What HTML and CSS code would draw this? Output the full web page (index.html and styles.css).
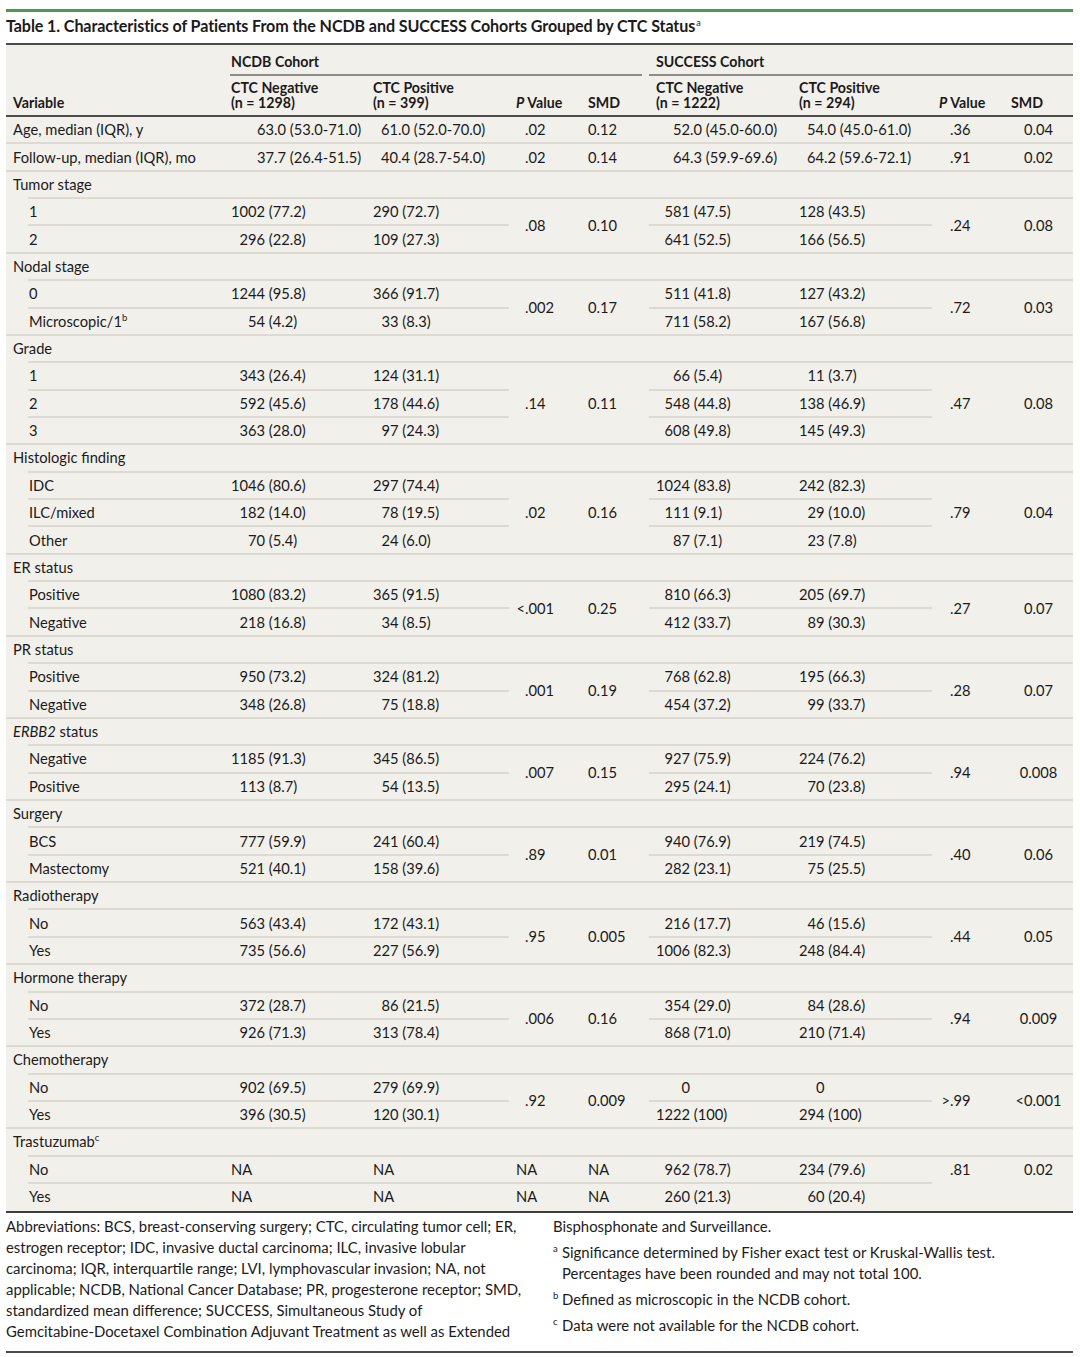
FILE: index.html
```html
<!DOCTYPE html>
<html lang="en">
<head>
<meta charset="utf-8">
<title>Table 1</title>
<link rel="stylesheet" href="styles.css">
</head>
<body>
<div class="page">
  <div class="rule-green"></div>
  <h1 class="title">Table 1. Characteristics of Patients From the NCDB and SUCCESS Cohorts Grouped by CTC Status<sup>a</sup></h1>
  <table class="tbl">
    <colgroup>
      <col class="w1"><col class="w2"><col class="w3"><col class="w4"><col class="w5"><col class="w6"><col class="w7"><col class="w8"><col class="w9">
    </colgroup>
    <thead>
      <tr class="hA">
        <th class="hv" rowspan="2">Variable</th>
        <th class="hc" colspan="4"><div class="coh coh1">NCDB Cohort</div></th>
        <th class="hc" colspan="4"><div class="coh coh2">SUCCESS Cohort</div></th>
      </tr>
      <tr class="hB">
        <th class="hb">CTC Negative<br>(n = 1298)</th>
        <th class="hb">CTC Positive<br>(n = 399)</th>
        <th class="hb"><i>P</i> Value</th>
        <th class="hb">SMD</th>
        <th class="hb">CTC Negative<br>(n = 1222)</th>
        <th class="hb">CTC Positive<br>(n = 294)</th>
        <th class="hb"><i>P</i> Value</th>
        <th class="hb">SMD</th>
      </tr>
    </thead>
    <tbody>
      <tr>
        <td class="v l">Age, median (IQR), y</td>
        <td class="m2 l">63.0 (53.0-71.0)</td><td class="m3 l">61.0 (52.0-70.0)</td>
        <td class="p l"><span class="ip"></span>.02</td><td class="s l">0.12</td>
        <td class="m6 l">52.0 (45.0-60.0)</td><td class="m7 l">54.0 (45.0-61.0)</td>
        <td class="p2 l"><span class="ip2"></span>.36</td><td class="s2 l">0.04</td>
      </tr>
      <tr>
        <td class="v l">Follow-up, median (IQR), mo</td>
        <td class="m2 l">37.7 (26.4-51.5)</td><td class="m3 l">40.4 (28.7-54.0)</td>
        <td class="p l"><span class="ip"></span>.02</td><td class="s l">0.14</td>
        <td class="m6 l">64.3 (59.9-69.6)</td><td class="m7 l">64.2 (59.6-72.1)</td>
        <td class="p2 l"><span class="ip2"></span>.91</td><td class="s2 l">0.02</td>
      </tr>

      <tr><td class="v li" colspan="9">Tumor stage</td></tr>
      <tr>
        <td class="vs li">1</td>
        <td class="l"><span class="n4">1002</span> (77.2)</td><td class="l"><span class="n3">290</span> (72.7)</td>
        <td class="p l" rowspan="2"><span class="ip"></span>.08</td><td class="s l" rowspan="2">0.10</td>
        <td class="l"><span class="n4">581</span> (47.5)</td><td class="l"><span class="n3">128</span> (43.5)</td>
        <td class="p2 l" rowspan="2"><span class="ip2"></span>.24</td><td class="s2 l" rowspan="2">0.08</td>
      </tr>
      <tr>
        <td class="vs l">2</td>
        <td class="l"><span class="n4">296</span> (22.8)</td><td class="l"><span class="n3">109</span> (27.3)</td>
        <td class="l"><span class="n4">641</span> (52.5)</td><td class="l"><span class="n3">166</span> (56.5)</td>
      </tr>

      <tr><td class="v li" colspan="9">Nodal stage</td></tr>
      <tr>
        <td class="vs li">0</td>
        <td class="l"><span class="n4">1244</span> (95.8)</td><td class="l"><span class="n3">366</span> (91.7)</td>
        <td class="p l" rowspan="2"><span class="ip"></span>.002</td><td class="s l" rowspan="2">0.17</td>
        <td class="l"><span class="n4">511</span> (41.8)</td><td class="l"><span class="n3">127</span> (43.2)</td>
        <td class="p2 l" rowspan="2"><span class="ip2"></span>.72</td><td class="s2 l" rowspan="2">0.03</td>
      </tr>
      <tr>
        <td class="vs l">Microscopic/1<sup>b</sup></td>
        <td class="l"><span class="n4">54</span> (4.2)</td><td class="l"><span class="n3">33</span> (8.3)</td>
        <td class="l"><span class="n4">711</span> (58.2)</td><td class="l"><span class="n3">167</span> (56.8)</td>
      </tr>

      <tr><td class="v li" colspan="9">Grade</td></tr>
      <tr>
        <td class="vs li">1</td>
        <td class="l"><span class="n4">343</span> (26.4)</td><td class="l"><span class="n3">124</span> (31.1)</td>
        <td class="p l" rowspan="3"><span class="ip"></span>.14</td><td class="s l" rowspan="3">0.11</td>
        <td class="l"><span class="n4">66</span> (5.4)</td><td class="l"><span class="n3">11</span> (3.7)</td>
        <td class="p2 l" rowspan="3"><span class="ip2"></span>.47</td><td class="s2 l" rowspan="3">0.08</td>
      </tr>
      <tr>
        <td class="vs li">2</td>
        <td class="l"><span class="n4">592</span> (45.6)</td><td class="l"><span class="n3">178</span> (44.6)</td>
        <td class="l"><span class="n4">548</span> (44.8)</td><td class="l"><span class="n3">138</span> (46.9)</td>
      </tr>
      <tr>
        <td class="vs l">3</td>
        <td class="l"><span class="n4">363</span> (28.0)</td><td class="l"><span class="n3">97</span> (24.3)</td>
        <td class="l"><span class="n4">608</span> (49.8)</td><td class="l"><span class="n3">145</span> (49.3)</td>
      </tr>

      <tr><td class="v li" colspan="9">Histologic finding</td></tr>
      <tr>
        <td class="vs li">IDC</td>
        <td class="l"><span class="n4">1046</span> (80.6)</td><td class="l"><span class="n3">297</span> (74.4)</td>
        <td class="p l" rowspan="3"><span class="ip"></span>.02</td><td class="s l" rowspan="3">0.16</td>
        <td class="l"><span class="n4">1024</span> (83.8)</td><td class="l"><span class="n3">242</span> (82.3)</td>
        <td class="p2 l" rowspan="3"><span class="ip2"></span>.79</td><td class="s2 l" rowspan="3">0.04</td>
      </tr>
      <tr>
        <td class="vs li">ILC/mixed</td>
        <td class="l"><span class="n4">182</span> (14.0)</td><td class="l"><span class="n3">78</span> (19.5)</td>
        <td class="l"><span class="n4">111</span> (9.1)</td><td class="l"><span class="n3">29</span> (10.0)</td>
      </tr>
      <tr>
        <td class="vs l">Other</td>
        <td class="l"><span class="n4">70</span> (5.4)</td><td class="l"><span class="n3">24</span> (6.0)</td>
        <td class="l"><span class="n4">87</span> (7.1)</td><td class="l"><span class="n3">23</span> (7.8)</td>
      </tr>

      <tr><td class="v li" colspan="9">ER status</td></tr>
      <tr>
        <td class="vs li">Positive</td>
        <td class="l"><span class="n4">1080</span> (83.2)</td><td class="l"><span class="n3">365</span> (91.5)</td>
        <td class="p l" rowspan="2"><span class="ip">&lt;</span>.001</td><td class="s l" rowspan="2">0.25</td>
        <td class="l"><span class="n4">810</span> (66.3)</td><td class="l"><span class="n3">205</span> (69.7)</td>
        <td class="p2 l" rowspan="2"><span class="ip2"></span>.27</td><td class="s2 l" rowspan="2">0.07</td>
      </tr>
      <tr>
        <td class="vs l">Negative</td>
        <td class="l"><span class="n4">218</span> (16.8)</td><td class="l"><span class="n3">34</span> (8.5)</td>
        <td class="l"><span class="n4">412</span> (33.7)</td><td class="l"><span class="n3">89</span> (30.3)</td>
      </tr>

      <tr><td class="v li" colspan="9">PR status</td></tr>
      <tr>
        <td class="vs li">Positive</td>
        <td class="l"><span class="n4">950</span> (73.2)</td><td class="l"><span class="n3">324</span> (81.2)</td>
        <td class="p l" rowspan="2"><span class="ip"></span>.001</td><td class="s l" rowspan="2">0.19</td>
        <td class="l"><span class="n4">768</span> (62.8)</td><td class="l"><span class="n3">195</span> (66.3)</td>
        <td class="p2 l" rowspan="2"><span class="ip2"></span>.28</td><td class="s2 l" rowspan="2">0.07</td>
      </tr>
      <tr>
        <td class="vs l">Negative</td>
        <td class="l"><span class="n4">348</span> (26.8)</td><td class="l"><span class="n3">75</span> (18.8)</td>
        <td class="l"><span class="n4">454</span> (37.2)</td><td class="l"><span class="n3">99</span> (33.7)</td>
      </tr>

      <tr><td class="v li" colspan="9"><i>ERBB2</i> status</td></tr>
      <tr>
        <td class="vs li">Negative</td>
        <td class="l"><span class="n4">1185</span> (91.3)</td><td class="l"><span class="n3">345</span> (86.5)</td>
        <td class="p l" rowspan="2"><span class="ip"></span>.007</td><td class="s l" rowspan="2">0.15</td>
        <td class="l"><span class="n4">927</span> (75.9)</td><td class="l"><span class="n3">224</span> (76.2)</td>
        <td class="p2 l" rowspan="2"><span class="ip2"></span>.94</td><td class="s2 l" rowspan="2">0.008</td>
      </tr>
      <tr>
        <td class="vs l">Positive</td>
        <td class="l"><span class="n4">113</span> (8.7)</td><td class="l"><span class="n3">54</span> (13.5)</td>
        <td class="l"><span class="n4">295</span> (24.1)</td><td class="l"><span class="n3">70</span> (23.8)</td>
      </tr>

      <tr><td class="v li" colspan="9">Surgery</td></tr>
      <tr>
        <td class="vs li">BCS</td>
        <td class="l"><span class="n4">777</span> (59.9)</td><td class="l"><span class="n3">241</span> (60.4)</td>
        <td class="p l" rowspan="2"><span class="ip"></span>.89</td><td class="s l" rowspan="2">0.01</td>
        <td class="l"><span class="n4">940</span> (76.9)</td><td class="l"><span class="n3">219</span> (74.5)</td>
        <td class="p2 l" rowspan="2"><span class="ip2"></span>.40</td><td class="s2 l" rowspan="2">0.06</td>
      </tr>
      <tr>
        <td class="vs l">Mastectomy</td>
        <td class="l"><span class="n4">521</span> (40.1)</td><td class="l"><span class="n3">158</span> (39.6)</td>
        <td class="l"><span class="n4">282</span> (23.1)</td><td class="l"><span class="n3">75</span> (25.5)</td>
      </tr>

      <tr><td class="v li" colspan="9">Radiotherapy</td></tr>
      <tr>
        <td class="vs li">No</td>
        <td class="l"><span class="n4">563</span> (43.4)</td><td class="l"><span class="n3">172</span> (43.1)</td>
        <td class="p l" rowspan="2"><span class="ip"></span>.95</td><td class="s l" rowspan="2">0.005</td>
        <td class="l"><span class="n4">216</span> (17.7)</td><td class="l"><span class="n3">46</span> (15.6)</td>
        <td class="p2 l" rowspan="2"><span class="ip2"></span>.44</td><td class="s2 l" rowspan="2">0.05</td>
      </tr>
      <tr>
        <td class="vs l">Yes</td>
        <td class="l"><span class="n4">735</span> (56.6)</td><td class="l"><span class="n3">227</span> (56.9)</td>
        <td class="l"><span class="n4">1006</span> (82.3)</td><td class="l"><span class="n3">248</span> (84.4)</td>
      </tr>

      <tr><td class="v li" colspan="9">Hormone therapy</td></tr>
      <tr>
        <td class="vs li">No</td>
        <td class="l"><span class="n4">372</span> (28.7)</td><td class="l"><span class="n3">86</span> (21.5)</td>
        <td class="p l" rowspan="2"><span class="ip"></span>.006</td><td class="s l" rowspan="2">0.16</td>
        <td class="l"><span class="n4">354</span> (29.0)</td><td class="l"><span class="n3">84</span> (28.6)</td>
        <td class="p2 l" rowspan="2"><span class="ip2"></span>.94</td><td class="s2 l" rowspan="2">0.009</td>
      </tr>
      <tr>
        <td class="vs l">Yes</td>
        <td class="l"><span class="n4">926</span> (71.3)</td><td class="l"><span class="n3">313</span> (78.4)</td>
        <td class="l"><span class="n4">868</span> (71.0)</td><td class="l"><span class="n3">210</span> (71.4)</td>
      </tr>

      <tr><td class="v li" colspan="9">Chemotherapy</td></tr>
      <tr>
        <td class="vs li">No</td>
        <td class="l"><span class="n4">902</span> (69.5)</td><td class="l"><span class="n3">279</span> (69.9)</td>
        <td class="p l" rowspan="2"><span class="ip"></span>.92</td><td class="s l" rowspan="2">0.009</td>
        <td class="l"><span class="n4">0</span></td><td class="l"><span class="n3">0</span></td>
        <td class="p2 l" rowspan="2"><span class="ip2">&gt;</span>.99</td><td class="s2 l" rowspan="2">&lt;0.001</td>
      </tr>
      <tr>
        <td class="vs l">Yes</td>
        <td class="l"><span class="n4">396</span> (30.5)</td><td class="l"><span class="n3">120</span> (30.1)</td>
        <td class="l"><span class="n4">1222</span> (100)</td><td class="l"><span class="n3">294</span> (100)</td>
      </tr>

      <tr><td class="v li" colspan="9">Trastuzumab<sup>c</sup></td></tr>
      <tr>
        <td class="vs li">No</td>
        <td class="l">NA</td><td class="l">NA</td>
        <td class="l">NA</td><td class="l">NA</td>
        <td class="l"><span class="n4">962</span> (78.7)</td><td class="l"><span class="n3">234</span> (79.6)</td>
        <td class="p2"><span class="ip2"></span>.81</td><td class="s2">0.02</td>
      </tr>
      <tr>
        <td class="vs">Yes</td>
        <td>NA</td><td>NA</td>
        <td>NA</td><td>NA</td>
        <td><span class="n4">260</span> (21.3)</td><td><span class="n3">60</span> (20.4)</td>
        <td></td><td></td>
      </tr>
    </tbody>
  </table>

  <div class="notes">
    <p>Abbreviations: BCS, breast-conserving surgery; CTC, circulating tumor cell; ER,<br>estrogen receptor; IDC, invasive ductal carcinoma; ILC, invasive lobular<br>carcinoma; IQR, interquartile range; LVI, lymphovascular invasion; NA, not<br>applicable; NCDB, National Cancer Database; PR, progesterone receptor; SMD,<br>standardized mean difference; SUCCESS, Simultaneous Study of<br>Gemcitabine-Docetaxel Combination Adjuvant Treatment as well as Extended<br>Bisphosphonate and Surveillance.</p>
    <p class="fn"><sup class="mk">a</sup>Significance determined by Fisher exact test or Kruskal-Wallis test.<br>Percentages have been rounded and may not total 100.</p>
    <p class="fn"><sup class="mk">b</sup>Defined as microscopic in the NCDB cohort.</p>
    <p class="fn"><sup class="mk">c</sup>Data were not available for the NCDB cohort.</p>
  </div>
  <div class="rule-bottom"></div>
</div>
</body>
</html>
```
FILE: styles.css
```css
:root {
  --bg: #f1f0eb;
  --ln: #dcdad3;
  --ink: #1c1a1b;
}

html, body {
  margin: 0;
  padding: 0;
  background: #ffffff;
}

body {
  font-family: "Lato", "Liberation Sans", sans-serif;
  color: var(--ink);
}

.page {
  margin-left: 6px;
  width: 1067px;
}

.rule-green {
  margin-top: 9px;
  height: 3px;
  background: #4b9d4c;
}

.title {
  margin: 0;
  padding: 4px 0 7px 0;
  font-size: 16.1px;
  line-height: 20px;
  font-weight: 700;
  letter-spacing: -0.1px;
  border-bottom: 2px solid #4a4a4a;
}

.title sup {
  font-size: 9px;
  font-weight: 400;
  line-height: 0;
  vertical-align: 6px;
  margin-left: 1px;
}

.tbl {
  width: 1067px;
  table-layout: fixed;
  border-collapse: separate;
  border-spacing: 0;
  background: var(--bg);
  border-bottom: 2px solid #3d3d3d;
  font-size: 14.7px;
}

.w1 { width: 218px; }
.w2 { width: 142px; }
.w3 { width: 143px; }
.w4 { width: 72px; }
.w5 { width: 68px; }
.w6 { width: 143px; }
.w7 { width: 140px; }
.w8 { width: 72px; }
.w9 { width: 69px; }

th {
  font-weight: 700;
  font-size: 14.2px;
  text-align: left;
  padding: 0 0 0 7px;
  line-height: 15px;
  white-space: nowrap;
}

.hA { height: 31px; }
.hB { height: 41px; }

.hv {
  vertical-align: bottom;
  padding-bottom: 5px;
  border-bottom: 2px solid #4a4a4a;
}

.hc {
  vertical-align: bottom;
  padding-left: 0;
}

.coh {
  line-height: 17px;
  padding: 0 0 4px 7px;
  border-bottom: 2px solid #8e8c88;
}

.coh1 {
  margin-left: 6px;
  margin-right: 7px;
  padding-left: 1px;
}

.hb {
  vertical-align: bottom;
  padding-bottom: 5px;
  border-bottom: 2px solid #4a4a4a;
}

th i { font-style: italic; }

tbody tr { height: 27.36px; }

td {
  padding: 0 0 3px 7px;
  white-space: nowrap;
  vertical-align: middle;
  line-height: 18px;
  font-variant-numeric: tabular-nums;
}

td.vs { padding-left: 23px; }

td.l {
  background-image: linear-gradient(var(--ln), var(--ln));
  background-repeat: no-repeat;
  background-size: 100% 2px;
  background-position: left bottom;
}

td.li {
  background-image: linear-gradient(var(--ln), var(--ln));
  background-repeat: no-repeat;
  background-size: calc(100% - 22px) 2px;
  background-position: right bottom;
}

.n4, .n3 {
  display: inline-block;
  text-align: right;
}
.n4 { width: 34px; }
.n3 { width: 25.5px; }

td.m2 { padding-left: 33px; }
td.m3 { padding-left: 15px; }
td.m6 { padding-left: 24px; }
td.m7 { padding-left: 15px; }

.ip, .ip2 {
  display: inline-block;
  text-align: right;
}
.ip { width: 9px; }
.ip2 { width: 11px; }

td.s2 {
  text-align: center;
  padding-right: 7px;
}

td sup {
  font-size: 9.5px;
  line-height: 0;
  vertical-align: 6px;
}

.notes {
  padding-top: 3px;
  height: 126px;
  column-count: 2;
  column-gap: 27px;
  column-fill: auto;
  font-size: 14.9px;
  line-height: 21px;
}

.notes p {
  margin: 0 0 5px 0;
  widows: 1;
  orphans: 1;
  white-space: nowrap;
}

.notes p.fn {
  padding-left: 9px;
}

.notes .mk {
  display: inline-block;
  width: 9px;
  margin-left: -9px;
  font-size: 9.5px;
  line-height: 0;
  vertical-align: 6px;
}

.rule-bottom {
  margin-top: 9px;
  height: 2px;
  background: #4a4a4a;
}
```
